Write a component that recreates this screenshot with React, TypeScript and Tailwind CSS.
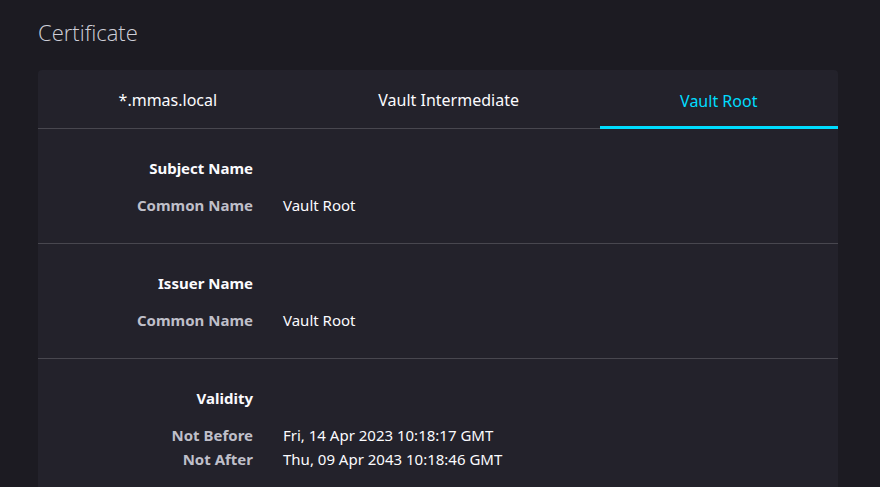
import React, { useState } from 'react';

const TABS = ['*.mmas.local', 'Vault Intermediate', 'Vault Root'];

type Row = { label: string; value: string };
type Section = { title: string; rows: Row[] };

const SECTIONS: Section[] = [
  { title: 'Subject Name', rows: [{ label: 'Common Name', value: 'Vault Root' }] },
  { title: 'Issuer Name', rows: [{ label: 'Common Name', value: 'Vault Root' }] },
  {
    title: 'Validity',
    rows: [
      { label: 'Not Before', value: 'Fri, 14 Apr 2023 10:18:17 GMT' },
      { label: 'Not After', value: 'Thu, 09 Apr 2043 10:18:46 GMT' },
    ],
  },
];

export default function App() {
  const [active, setActive] = useState(2);

  return (
    <div
      className="min-h-screen bg-[#1c1b22] px-[38px] pt-[16px] text-[#fbfbfe]"
      style={{ fontFamily: '"Noto Sans", "Open Sans", sans-serif' }}
    >
      <h1
        className="text-[22px] font-light leading-[32px] text-[#cfcfd8]"
        style={{ fontFamily: '"Open Sans", "Noto Sans", sans-serif' }}
      >
        Certificate
      </h1>

      <div className="mt-[22px] w-[800px] rounded-[4px] bg-[#23222b]">
        {/* Tabs */}
        <div className="flex border-b border-[#48474f]">
          {TABS.map((t, i) => (
            <button
              key={t}
              type="button"
              onClick={() => setActive(i)}
              className={
                i === active
                  ? 'flex-auto h-[59px] border-b-[3px] border-[#00ddff] -mb-px pt-[5px] text-[16px] text-[#00ddff]'
                  : 'flex-auto h-[58px] pt-[2px] text-[16px] text-[#fbfbfe]'
              }
            >
              {t}
            </button>
          ))}
        </div>

        {/* Sections */}
        {SECTIONS.map((s, si) => (
          <div
            key={s.title}
            className={
              si < SECTIONS.length - 1
                ? 'border-b border-[#48474f] pt-[27px] pb-[26px]'
                : 'pt-[27px] pb-[26px]'
            }
          >
            <div className="flex text-[15px] leading-6">
              <div className="w-[215px] text-right font-bold text-[#fbfbfe]">{s.title}</div>
            </div>
            <div className="mt-[13px]">
              {s.rows.map((r) => (
                <div key={r.label} className="flex text-[15px] leading-6">
                  <div className="w-[215px] shrink-0 text-right font-bold text-[#bfbfc9]">{r.label}</div>
                  <div className="pl-[30px] text-[#fbfbfe]">{r.value}</div>
                </div>
              ))}
            </div>
          </div>
        ))}
      </div>
    </div>
  );
}
